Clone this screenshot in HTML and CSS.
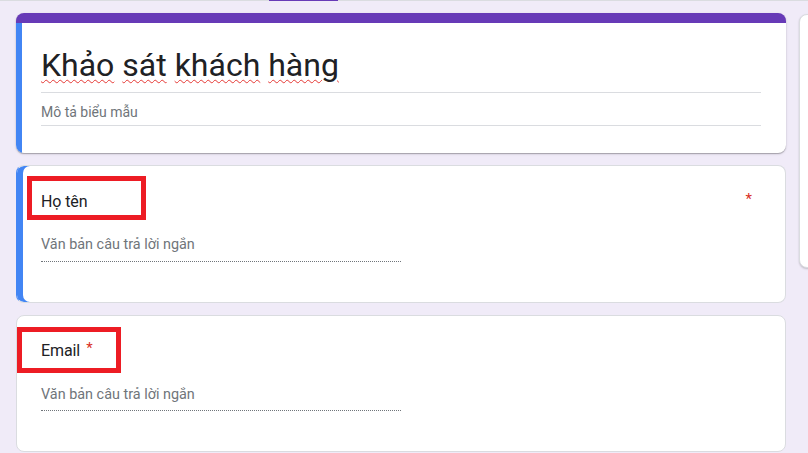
FILE: index.html
```html
<!DOCTYPE html>
<html lang="vi">
<head>
<meta charset="utf-8">
<title>Khảo sát khách hàng</title>
<link rel="stylesheet" href="styles.css">
</head>
<body>
<div class="topbar"><div class="tab-indicator"></div></div>
<div class="layout">
  <main class="column">
    <section class="card title-card">
      <div class="title-body">
        <div class="form-title"><span class="sp">Khảo</span> <span class="sp">sát</span> <span class="sp">khách</span> <span class="sp">hàng</span></div>
        <div class="form-desc">Mô tả biểu mẫu</div>
      </div>
    </section>

    <section class="card question active">
      <div class="q-head">
        <span class="q-title">Họ tên</span>
        <span class="req req-right">*</span>
      </div>
      <div class="answer">Văn bản câu trả lời ngắn</div>
      <div class="mark mark-1"></div>
    </section>

    <section class="card question compact">
      <div class="q-head">
        <span class="q-title">Email<span class="req req-inline">*</span></span>
      </div>
      <div class="answer">Văn bản câu trả lời ngắn</div>
      <div class="mark mark-2"></div>
    </section>
  </main>
  <aside class="side-panel"></aside>
</div>
</body>
</html>
```
FILE: styles.css
```css
* { box-sizing: border-box; }
html, body { margin: 0; padding: 0; }
body {
  background: #f0ebf8;
  font-family: Roboto, "Liberation Sans", Arial, sans-serif;
  color: #202124;
  overflow: hidden;
  height: 453px;
}
.topbar {
  height: 1px;
  background: #dadce0;
  position: relative;
}
.tab-indicator {
  position: absolute;
  left: 269px;
  top: 0;
  width: 69px;
  height: 1px;
  background: #673ab7;
}
.layout {
  display: flex;
  gap: 13px;
  padding: 12px 0 0 16px;
}
.column {
  width: 770px;
  flex: none;
  display: flex;
  flex-direction: column;
  gap: 12px;
}
.card {
  background: #fff;
  border: 1px solid #dadce0;
  border-radius: 8px;
  position: relative;
}
.title-card {
  border: none;
  border-top: 10px solid #673ab7;
  overflow: hidden;
  box-shadow: 0 1px 1px rgba(0,0,0,.25), 0 1px 3px rgba(0,0,0,.12);
}
.title-body {
  box-shadow: inset 6px 0 0 #4285f4;
  padding: 22px 25px 27px 25px;
}
.form-title {
  font-size: 32px;
  line-height: 40px;
  color: #202124;
  padding-bottom: 7px;
  border-bottom: 1px solid #dadce0;
  white-space: nowrap;
}
.sp {
  text-decoration: underline wavy #e53935;
  text-decoration-thickness: 1px;
  text-underline-offset: 3px;
}
.form-desc {
  font-size: 14px;
  line-height: 20px;
  color: #70757a;
  padding: 9px 0 3px;
  border-bottom: 1px solid #dadce0;
}
.question {
  padding: 24px 24px 40px 24px;
}
.question.active {
  box-shadow: inset 6px 0 0 #4285f4;
  border-left-color: #4285f4;
}
.q-head {
  display: flex;
  justify-content: space-between;
  align-items: flex-start;
  font-size: 16px;
  line-height: 24px;
  color: #202124;
}
.q-title { letter-spacing: -0.1px; }
.req {
  color: #d93025;
  font-size: 15px;
  position: relative;
}
.req-right {
  margin-right: 9px;
  top: -3px;
}
.req-inline {
  padding-left: 6px;
  top: -3px;
}
.answer {
  margin-top: 21px;
  width: 360px;
  font-size: 14.4px;
  line-height: 20px;
  color: #70757a;
  padding-bottom: 6px;
  border-bottom: 1px dotted #70757a;
}
.compact .q-head { margin-top: -1px; }
.compact .answer {
  margin-top: 22px;
  padding-bottom: 5px;
}
.mark {
  position: absolute;
  border: 5px solid #ed1c24;
}
.mark-1 {
  left: 10px;
  top: 10px;
  width: 119px;
  height: 44px;
}
.mark-2 {
  left: 0;
  top: 11px;
  width: 104px;
  height: 46px;
}
.side-panel {
  width: 40px;
  height: 254px;
  margin-top: 1px;
  background: #fff;
  border: 1px solid #dadce0;
  border-radius: 8px;
  box-shadow: 0 1px 2px rgba(0,0,0,.2);
  flex: none;
}
```
